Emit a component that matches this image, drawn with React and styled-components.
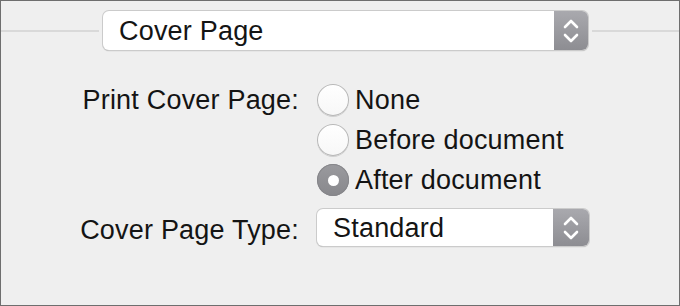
import React from "react";
import styled, { createGlobalStyle } from "styled-components";

const GlobalStyle = createGlobalStyle`
  html, body {
    margin: 0;
    padding: 0;
    background: #efefef;
  }
  * { box-sizing: border-box; }
`;

const Sheet = styled.div`
  width: 680px;
  height: 306px;
  background: #efefef;
  border: 1px solid #6e6e6e;
  font-family: "Liberation Sans", Arial, sans-serif;
  font-size: 27px;
  letter-spacing: 0.2px;
  color: #141414;
  overflow: hidden;
`;

const Header = styled.div`
  display: flex;
  align-items: center;
  gap: 4px;
  padding-top: 10px;
`;

const Rule = styled.div`
  flex: ${(p) => (p.grow ? "1" : `0 0 ${p.width}px`)};
  height: 2px;
  background: #d9d9d9;
`;

const Popup = styled.div`
  display: flex;
  width: ${(p) => p.width}px;
  height: ${(p) => p.height}px;
  background: #fff;
  border-radius: 6px;
  box-shadow: 0 0 0 1px #cbcbcb, 0 1px 1px #9c9c9c;
  overflow: hidden;
`;

const PopupLabel = styled.div`
  flex: 1;
  display: flex;
  align-items: center;
  padding-left: ${(p) => p.pad}px;
  padding-top: 2px;
`;

const Stepper = styled.div`
  flex: 0 0 ${(p) => p.width}px;
  display: flex;
  align-items: center;
  justify-content: center;
  background: linear-gradient(#a9a9ae, #8d8d92);
`;

const Form = styled.div`
  display: grid;
  grid-template-columns: 298px auto;
  column-gap: 18px;
  margin-top: 30px;
`;

const Label = styled.div`
  text-align: right;
  height: 40px;
  line-height: 40px;
  margin-top: ${(p) => p.top || 0}px;
`;

const Options = styled.div`
  display: flex;
  flex-direction: column;
`;

const Option = styled.div`
  display: flex;
  align-items: center;
  gap: 6px;
  height: 40px;
`;

const Dot = styled.span`
  width: 32px;
  height: 32px;
  border-radius: 50%;
  display: flex;
  align-items: center;
  justify-content: center;
  background: ${(p) =>
    p.on ? "linear-gradient(#9a9a9e, #88888c)" : "linear-gradient(#ffffff, #f7f7f7)"};
  box-shadow: ${(p) =>
    p.on ? "inset 0 0 0 1px #86868a" : "inset 0 0 0 1px #b8b8b8, 0 1px 0 #d0d0d0"};

  &::after {
    content: "";
    display: ${(p) => (p.on ? "block" : "none")};
    width: 11px;
    height: 11px;
    border-radius: 50%;
    background: #fff;
  }
`;

const PopupCell = styled.div`
  margin-top: ${(p) => p.top}px;
`;

const Chevrons = () => (
  <svg width="18" height="28" viewBox="0 0 18 28" fill="none">
    <path d="M3 10 L9 4 L15 10" stroke="#fff" strokeWidth="2.6" strokeLinecap="round" strokeLinejoin="round" />
    <path d="M3 18 L9 24 L15 18" stroke="#fff" strokeWidth="2.6" strokeLinecap="round" strokeLinejoin="round" />
  </svg>
);

const Radio = ({ on, children }) => (
  <Option>
    <Dot on={on ? 1 : 0} />
    {children}
  </Option>
);

export default function App() {
  return (
    <>
      <GlobalStyle />
      <Sheet>
        <Header>
          <Rule width={98} />
          <Popup width={485} height={39}>
            <PopupLabel pad={16}>Cover Page</PopupLabel>
            <Stepper width={34}>
              <Chevrons />
            </Stepper>
          </Popup>
          <Rule grow />
        </Header>
        <Form>
          <Label>Print Cover Page:</Label>
          <Options>
            <Radio>None</Radio>
            <Radio>Before document</Radio>
            <Radio on>After document</Radio>
          </Options>
          <Label top={10}>Cover Page Type:</Label>
          <PopupCell top={9}>
            <Popup width={272} height={37}>
              <PopupLabel pad={16}>Standard</PopupLabel>
              <Stepper width={36}>
                <Chevrons />
              </Stepper>
            </Popup>
          </PopupCell>
        </Form>
      </Sheet>
    </>
  );
}
